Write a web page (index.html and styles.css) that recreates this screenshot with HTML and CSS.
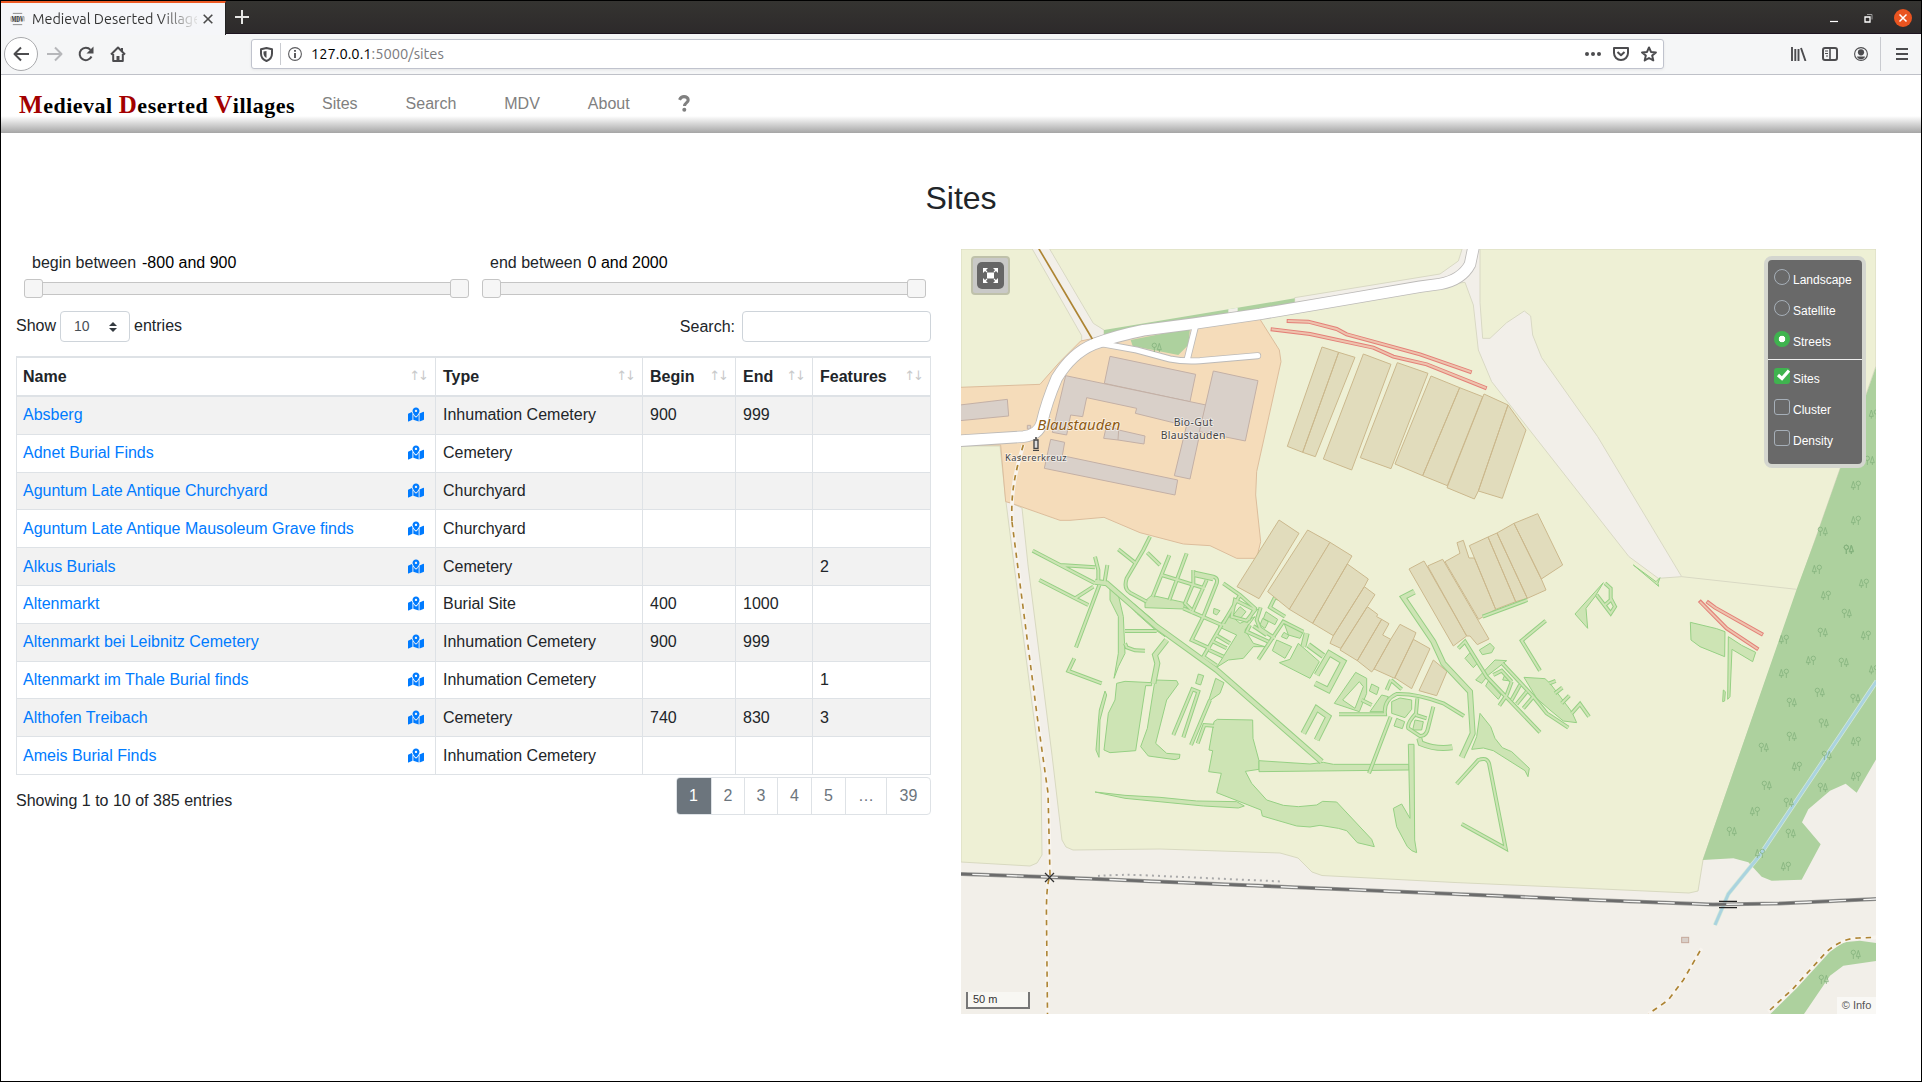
FILE: index.html
```html
<!DOCTYPE html>
<html lang="en">
<head>
<meta charset="utf-8">
<title>Medieval Deserted Villages</title>
<link rel="stylesheet" href="styles.css">
</head>
<body>
<svg class="defs" width="0" height="0">
  <symbol id="mapicon" viewBox="0 0 576 512"><path fill="currentColor" d="M288 0c-69.59 0-126 56.41-126 126 0 56.26 82.35 158.8 113.900 196.020 6.390 7.540 17.820 7.540 24.200 0C331.650 284.800 414 182.260 414 126 414 56.410 357.590 0 288 0zm0 168c-23.200 0-42-18.800-42-42s18.800-42 42-42 42 18.800 42 42-18.800 42-42 42zM20.120 215.950A32 32 0 0 0 0 245.660v250.320c0 11.320 11.430 19.060 21.940 14.860L160 448V214.920c-8.840-15.980-16.070-31.540-21.250-46.420L20.120 215.950zM288 359.670c-14.070 0-27.380-6.180-36.510-16.960-19.660-23.200-40.570-49.620-59.490-76.720v182l192 64V266c-18.920 27.090-39.820 53.520-59.490 76.720-9.130 10.770-22.440 16.950-36.510 16.950zm266.060-198.510L416 224v288l139.880-55.950A31.996 31.996 0 0 0 576 426.340V176.020c0-11.320-11.430-19.060-21.940-14.860z"/></symbol>
  <g id="trees" fill="none" stroke="#86b37e" stroke-width="2.500"><circle cx="8" cy="8" r="6.500"/><path d="M8 14v14M23 2l-6 19h12zM23 21v7"/></g>
  <g id="treesb" fill="none" stroke="#86b37e" stroke-width="2.500"><circle cx="23" cy="8" r="6.500"/><path d="M23 14v14M8 2l-6 19h12zM8 21v7"/></g>
</svg>

<header class="browser">
  <div class="tabstrip">
    <div class="tab">
      <svg class="favicon" viewBox="0 0 16 14"><path d="M3 1h10M3 13h10" stroke="#888"/><path d="M0 7h16" stroke="#ccc" stroke-width="5"/><text x="1.500" y="10.500" font-size="9" font-weight="bold" textLength="13" lengthAdjust="spacingAndGlyphs" fill="#333">MDV</text></svg>
      <span class="tabname">Medieval Deserted Villages</span>
      <svg class="close" viewBox="0 0 10 10"><path d="M.7.7l8.600 8.600M9.300.7L.7 9.300" stroke="#4a4a4a" stroke-width="1.600"/></svg>
    </div>
    <svg class="plus" viewBox="0 0 14 14"><path d="M7 0v14M0 7h14" stroke="#e6e6e4" stroke-width="2"/></svg>
    <div class="winbuttons">
      <svg width="8" height="18"><path d="M0 12.500h8" stroke="#fff" stroke-width="1.200"/></svg>
      <svg width="9" height="18"><path d="M1 8h5v5h-5z" fill="none" stroke="#fff" stroke-width="1.300"/><path d="M3 5.500h5v5" fill="none" stroke="#999"/></svg>
      <svg width="18" height="18"><circle cx="9" cy="9" r="9" fill="#e95420"/><path d="M5.500 5.500l7 7M12.500 5.500l-7 7" stroke="#fff" stroke-width="1.500"/></svg>
    </div>
  </div>
  <div class="toolbar">
    <div class="back"><svg width="17" height="16" viewBox="0 0 17 16"><path d="M16 8H2M8 1.500L1.500 8L8 14.500" class="ic"/></svg></div>
    <svg class="fwd" width="17" height="16" viewBox="0 0 17 16"><path d="M1 8h14M9 1.500L15.500 8L9 14.500" class="ic dim"/></svg>
    <svg class="reload" width="16" height="16" viewBox="0 0 16 16"><path d="M13.500 10.500A6.200 6.200 0 1 1 12.500 3.800" class="ic"/><path d="M15.500.5v7h-7z" fill="#4c4c4f"/></svg>
    <svg class="home" width="16" height="16" viewBox="0 0 16 16"><path d="M1 8.500L8 1.500l7 7M3.200 8v7h9.600V8M12 2v3" class="ic"/><path d="M6.500 10h3v5h-3z" fill="#4c4c4f"/></svg>
    <div class="urlbar">
      <svg width="13" height="15" viewBox="0 0 13 15"><path d="M6.500 1L12 2.200v4.300c0 4-3 6.500-5.500 7.500C4 13 1 10.500 1 6.500V2.200z" class="ic"/><path d="M6.500 4v7c-1.700-1-3-2.500-3-4.800V4.500z" fill="#4c4c4f"/></svg>
      <i class="vsep"></i>
      <svg width="14" height="14" viewBox="0 0 14 14"><circle cx="7" cy="7" r="6.400" fill="none" stroke="#5c5c5f" stroke-width="1.100"/><path d="M7 6v5M7 3v1.800" stroke="#4c4c4f" stroke-width="1.800"/></svg>
      <span class="url"><b>127.0.0.1</b>:5000/sites</span>
      <svg width="16" height="16" viewBox="0 0 16 16"><g fill="#4c4c4f"><circle cx="2" cy="8" r="2"/><circle cx="8" cy="8" r="2"/><circle cx="14" cy="8" r="2"/></g></svg>
      <svg class="pocket" width="16" height="14" viewBox="0 0 16 14"><path d="M1 1h14v5a7 7 0 0 1-14 0z" class="ic"/><path d="M4.500 5L8 8.300L11.500 5" class="ic"/></svg>
      <svg class="star" width="16" height="16" viewBox="0 0 16 16"><path d="M8 1.500l2 4.400 4.900.5-3.700 3.200 1.100 4.800L8 12l-4.300 2.400 1.100-4.800L1.100 6.400 6 5.900z" class="ic"/></svg>
    </div>
    <div class="tools">
      <svg width="16" height="14" viewBox="0 0 16 14"><path d="M1 0v14M4.300 2v12M7.500 2v12M10 1l4.500 13" stroke="#4c4c4f" stroke-width="1.900"/></svg>
      <svg width="16" height="14" viewBox="0 0 16 14"><rect x="1" y="1" width="14" height="12" rx="2" class="ic"/><path d="M8 1v12" stroke="#4c4c4f" stroke-width="1.600"/><path d="M3 4h3M3 6.500h3M4 9h2" stroke="#4c4c4f"/></svg>
      <svg width="14" height="14" viewBox="0 0 14 14"><circle cx="7" cy="7" r="6.400" fill="none" stroke="#4c4c4f" stroke-width="1.100"/><circle cx="7" cy="5.300" r="3.100" fill="#4c4c4f"/><path d="M3 9.500h8c0 1.500-2 2.700-4 2.700s-4-1.200-4-2.700z" fill="#4c4c4f"/></svg>
      <i class="vsep"></i>
      <svg width="12" height="12" viewBox="0 0 12 12"><path d="M0 1h12M0 6h12M0 11h12" stroke="#4c4c4f" stroke-width="2"/></svg>
    </div>
  </div>
</header>

<nav class="sitenav">
  <div class="brand"><b>M</b>edieval <b>D</b>eserted <b>V</b>illages</div>
  <div class="links"><a>Sites</a><a>Search</a><a>MDV</a><a>About</a></div>
  <svg class="help" viewBox="0 0 12 17"><path d="M1.500 4.800C2.500 2.700 4 1.600 6 1.600c2.400 0 4.200 1.300 4.200 3.300 0 3-3.700 2.900-3.700 6" fill="none" stroke="#808080" stroke-width="3.100"/><circle cx="6.300" cy="14.800" r="2" fill="#808080"/></svg>
</nav>

<main>
  <h2>Sites</h2>
  <div class="columns">
    <section class="list">
      <div class="ranges">
        <div class="range first"><div class="rlabel">begin between <b>-800 and 900</b></div><div class="slider"><i></i><i></i></div></div>
        <div class="range"><div class="rlabel">end between <b>0 and 2000</b></div><div class="slider"><i></i><i></i></div></div>
      </div>
      <div class="filters">
        <span class="show">Show</span>
        <span class="select">10<svg width="8" height="10" viewBox="0 0 8 10"><path d="M4 0l4 4H0zM4 10l4-4H0z" fill="#343a40"/></svg></span>
        <span class="show">entries</span>
        <span class="find">Search:</span><span class="input"></span>
      </div>
      <table>
        <colgroup><col class="c1"><col class="c2"><col class="c3"><col class="c4"><col class="c5"></colgroup>
        <thead><tr><th>Name<em>↑↓</em></th><th>Type<em>↑↓</em></th><th>Begin<em>↑↓</em></th><th>End<em>↑↓</em></th><th>Features<em>↑↓</em></th></tr></thead>
        <tbody>
        <tr><td><a>Absberg</a><svg><use href="#mapicon"/></svg></td><td>Inhumation Cemetery</td><td>900</td><td>999</td><td></td></tr>
        <tr><td><a>Adnet Burial Finds</a><svg><use href="#mapicon"/></svg></td><td>Cemetery</td><td></td><td></td><td></td></tr>
        <tr><td><a>Aguntum Late Antique Churchyard</a><svg><use href="#mapicon"/></svg></td><td>Churchyard</td><td></td><td></td><td></td></tr>
        <tr><td><a>Aguntum Late Antique Mausoleum Grave finds</a><svg><use href="#mapicon"/></svg></td><td>Churchyard</td><td></td><td></td><td></td></tr>
        <tr><td><a>Alkus Burials</a><svg><use href="#mapicon"/></svg></td><td>Cemetery</td><td></td><td></td><td>2</td></tr>
        <tr><td><a>Altenmarkt</a><svg><use href="#mapicon"/></svg></td><td>Burial Site</td><td>400</td><td>1000</td><td></td></tr>
        <tr><td><a>Altenmarkt bei Leibnitz Cemetery</a><svg><use href="#mapicon"/></svg></td><td>Inhumation Cemetery</td><td>900</td><td>999</td><td></td></tr>
        <tr><td><a>Altenmarkt im Thale Burial finds</a><svg><use href="#mapicon"/></svg></td><td>Inhumation Cemetery</td><td></td><td></td><td>1</td></tr>
        <tr><td><a>Althofen Treibach</a><svg><use href="#mapicon"/></svg></td><td>Cemetery</td><td>740</td><td>830</td><td>3</td></tr>
        <tr><td><a>Ameis Burial Finds</a><svg><use href="#mapicon"/></svg></td><td>Inhumation Cemetery</td><td></td><td></td><td></td></tr>
        </tbody>
      </table>
      <div class="foot">
        <span>Showing 1 to 10 of 385 entries</span>
        <div class="pages"><a class="on">1</a><a class="slim">2</a><a class="slim">3</a><a>4</a><a>5</a><a class="gap">…</a><a class="last">39</a></div>
      </div>
    </section>

    <section class="map">
      <svg class="canvas" viewBox="961 249 915 765">
        <rect x="961" y="249" width="915" height="765" fill="#f2efe9"/>
        <g class="farm">
          <path d="M961 249H1876V366L1703 860 1698 891 1689 893 1580 888 1455 882.500 1322 875.500 1312 872 1298 858 1280 853 1160 849 1073 850 1066 847 1062 840 1052 755 1028 565 1022 508 961 480Z"/>
          <path d="M961 446H1000L1006 502 1014 565 1041 773 1042 855 1037 863 1030 866 961 862Z"/>
        </g>
        <!-- farm yard, roads and the upper field strips -->
        <g transform="translate(960 245) scale(.33333)">
          <g class="bare">
            <path d="M210 0H262L400 235 432 255V285L365 290V272Z"/>
            <path d="M1004 158L1440 87 1495 48 1510 0H1560V172L1568 280H1590L1640 233 1693 198 1712 213 1718 270 1745 338 1913 575 2165 995 2095 1000 2007 935 1595 410 1555 315 1540 180 1515 112 1380 130 1004 180Z"/>
            <path d="M2165 995L2510 1033" fill="none"/>
          </g>
          <path class="yard" d="M0 427L240 418 300 350 362 288 450 270 900 223 958 315 963 350 890 680 887 750 902 890 890 940H830L750 902 670 897 540 863 432 817 330 826H300L155 775 137 770 122 600H0Z"/>
          <path class="wood" d="M432 255L1004 160V180L700 230 432 275ZM512 285L690 250 685 300 655 330 518 303Z"/>
          <path d="M805 193l28-5v16l-28 4z" fill="#f2efe9"/>
          <g class="bld">
            <path d="M450 334L707 388 690 470 433 415Z"/>
            <path d="M317 392L738 480 690 702 643 692 680 540 640 533 526 505 530 490 380 458 368 515 332 510 320 570 277 562Z"/>
            <path d="M760 378L894 407 856 588 718 560Z"/>
            <path d="M272 583L314 592 307 632 653 705 645 750 253 670Z"/>
            <path d="M440 540L476 555 555 573 552 597 474 585 431 580ZM476 555L474 585"/>
            <path d="M0 480L142 463 146 513 0 527ZM202 541H212V552H202Z"/>
          </g>
          <g class="road case"><path d="M-10 588L190 575Q235 570 245 535Q260 470 290 400Q335 325 400 298Q470 272 550 256L700 236 900 207 1130 168 1380 125 1440 117Q1505 105 1530 58L1542 0"/><path class="minor" d="M420 295L530 315 630 342Q670 350 720 347L893 332M682 342L706 245"/></g>
          <g class="road top"><path d="M-10 588L190 575Q235 570 245 535Q260 470 290 400Q335 325 400 298Q470 272 550 256L700 236 900 207 1130 168 1380 125 1440 117Q1505 105 1530 58L1542 0"/><path class="minor" d="M420 295L530 315 630 342Q670 350 720 347L893 332M682 342L706 245"/></g>
          <path d="M230 0L397 282" class="track solid"/>
          <path d="M190 600C160 700 150 760 158 860L175 960" class="halo"/>
          <path d="M190 600C160 700 150 760 158 860L175 960" class="track"/>
          <g class="red"><path d="M932 253L1050 267 1240 308 1300 335 1400 358 1580 430"/><path d="M980 228L1045 230 1130 252 1160 268 1380 328 1535 382"/></g>
          <g class="redin"><path d="M935 253L1050 267 1240 308 1300 335 1400 358 1578 429"/><path d="M983 228L1045 230 1130 252 1160 268 1380 328 1533 381"/></g>
          <g class="hut">
            <path d="M1086 306L1136 322 1028 622 982 604ZM1136 322L1185 337 1066 635 1028 622ZM1210 327L1293 358 1175 675 1090 642ZM1312 353L1404 385 1293 671 1201 638Z"/>
            <path d="M1413 393L1499 428 1388 692 1305 657ZM1499 428L1568 455 1462 722 1388 692ZM1572 447L1644 480 1555 738 1543 762 1461 728ZM1644 480L1698 555 1627 760 1555 738Z"/>
          </g>
          <use href="#trees" x="575" y="293"/>
          <path d="M222 585h12v25h-12zM225 579h6M219 616h18" fill="#ddd" stroke="#444" stroke-width="4"/>
          <g class="lbl">
            <text x="232" y="554" font-size="42" textLength="249" lengthAdjust="spacingAndGlyphs" fill="#8d5a14" font-style="italic">Blaustauden</text>
            <text x="641" y="543" font-size="31" textLength="117">Bio-Gut</text>
            <text x="602" y="582" font-size="31" textLength="194">Blaustauden</text>
            <text x="135" y="649" font-size="28" textLength="185">Kasererkreuz</text>
          </g>
        </g>
        <!-- excavated areas, west -->
        <g transform="translate(1010 520) scale(.33333)">
          <g class="dig">
            <path d="M300 205L325 225 340 290 345 400 325 440 312 475 325 400V290L300 240ZM325 220L370 250 430 300 465 350 430 325 380 280ZM405 243L425 226 525 248 520 267 405 263Z"/>
            <path d="M655 280L690 310 735 290 705 330 730 370 765 380 730 380 700 415 655 420 620 442 680 345 625 320Z"/>
            <path d="M285 513L268 570 258 690 267 712 270 600 290 525ZM320 490L345 484 425 488V497H407L377 692 300 698 282 690 295 580 315 540ZM435 480L500 482 505 492 470 540 437 670 470 700 510 703 508 715 495 719 415 708 392 680 412 625ZM565 462L581 467 572 495 557 490ZM617 475L642 488 630 520 595 545Z"/>
            <path d="M612 605L622 598 728 600 729 655 747 722V748L706 754 725 790 770 840 820 856 865 860 920 855 938 844 980 846 1085 958 1093 980 1042 968 1010 932 985 925 930 916 900 921 860 918 757 888 753 870 620 818 634 760 596 755 608 692 597 690Z"/>
            <path d="M255 816L345 826 450 832 560 843 680 845 703 858 685 864 580 858 345 835ZM747 722L900 732 940 727 970 733H1197V750L747 755Z"/>
            <path d="M800 360L845 380 825 415 787 392ZM820 303L880 335 870 355 835 345ZM865 370L928 425 900 475 808 428 840 418ZM690 260L708 275 690 297 670 285ZM612 265L630 272 620 285 610 280ZM768 275L803 298 795 314 760 296ZM758 295L775 305 765 325 750 315ZM822 337L837 346 830 357 814 350Z"/>
          </g>
          <defs>
            <g id="westlanes" fill="none"><path d="M68 92L150 135 255 190M150 135L255 142M88 180L195 235 235 255M195 235L250 200M268 195L225 310 198 382M255 110L265 150V190M292 135L283 190M420 50L400 90 350 175Q340 205 360 218L410 245M325 88L375 128M412 98L450 135M478 106L428 230M530 100L478 240M455 165L585 205M550 150V190L525 250 545 270M555 158L610 170Q625 175 620 190L580 290M590 180L545 280M520 265L635 315M580 290L545 360 600 385M635 315L580 410 620 437M618 345L660 370M610 365L650 385M597 390L640 410M640 190L690 225 735 265 715 300M690 225L640 310M675 240L735 270 710 302 665 290ZM345 333H440M345 370L350 382 375 391 405 392M193 415L175 453 275 490M490 645L547 508 565 515 520 652M543 675L600 540M563 670L583 615 612 617M832 245L795 232 780 262 825 290M752 262L740 300 750 325 795 355M720 315L710 335 775 365M730 318L770 345M745 418L820 305 880 335"/></g>
            <g id="westwide" fill="none"><path d="M255 185L290 190 440 320 620 450 935 725M470 360L435 405 442 430 430 490M555 163L610 175M890 340L880 380M895 375L940 408M920 465L958 400 1000 425 955 510 915 490M880 640L920 565 955 590 920 660"/></g>
          </defs>
          <use href="#westlanes" class="lane"/><use href="#westwide" class="lane wide"/><use href="#westlanes" class="lanein"/><use href="#westwide" class="lanein wide"/>
        </g>
        <!-- excavated areas and huts, east -->
        <g transform="translate(1320 500) scale(.33333)">
          <g class="hut">
            <path d="M-123 60L-63 100-183 296-249 260ZM-37 90L30 127-92 328-157 275Z"/>
            <path d="M30 127L96 168 82 192-22 370-92 328ZM82 192L145 237 133 260 40 407-22 370ZM133 260L165 284 142 320 62 445 30 430 40 407ZM142 320L173 343 170 350 185 358 112 482 60 450ZM185 358L207 371 188 405 212 418 162 507 155 516 112 482ZM240 373L288 398 280 418 224 535 162 507 212 418ZM280 418L330 446 275 566 224 533ZM340 480L381 514 350 587 297 572Z"/>
            <path d="M267 207L312 183 440 408 400 438ZM323 198L368 178 507 417 472 434 450 408H440ZM375 185L420 160 411 128 430 121 447 174H463L527 328 476 358ZM448 137L504 111 587 305 527 328ZM504 111L531 99 622 295 587 305ZM531 99L582 70 664 237 678 270 622 295ZM582 70L653 41 728 195 664 237Z"/>
          </g>
          <g class="dig">
            <path fill-rule="evenodd" d="M107 517L140 535V580L118 635 43 610ZM118 545L130 560 105 625 68 600Z"/>
            <path d="M155 552L177 563 170 584 148 573ZM185 585L205 590 190 635H150ZM215 605L240 594 275 600V628L255 653 215 640ZM230 655L254 665 247 686 222 678ZM285 660L310 665 305 690 278 690ZM265 733H282L284 1020 290 1058Q275 1055 262 1040L230 980 220 925 245 912 270 955Z"/>
            <path d="M480 640L512 680 525 715 547 743 575 755 628 805 624 830 615 812 520 752 490 744 455 748 470 710ZM478 450L510 430 523 443 515 458 487 464ZM450 458L472 490 460 503 435 475ZM467 540L525 480 560 482 505 525 485 550ZM555 523L572 543 548 540ZM505 543L543 585 535 598 497 558ZM612 532L675 536 690 550 755 635 770 668 730 663 690 630 650 595ZM765 342L850 248 825 290 798 325 803 385Z"/>
          </g>
          <defs>
            <g id="eastlanes" fill="none"><path d="M57 643H195Q190 600 230 582Q290 580 370 610L432 648M213 540L200 570M213 540L245 568M125 600L155 615M212 650L147 820M292 595L288 640Q260 670 265 685L300 708Q320 710 325 680L340 620M288 645L320 655M410 852L475 780Q500 770 507 790L557 1045 425 972M415 445L435 425 500 530 660 697M547 490L640 590 680 640 745 683M520 525L545 512 575 545M575 545L560 585M600 555L575 600M620 575L590 612M640 590L610 625M560 585L538 617M688 550L707 543M705 580L727 563M725 610L748 587M755 640L780 612 807 650M677 362L605 422 660 512M488 350L622 300M855 250L872 265V295L885 320 872 340 830 285M872 300L855 315"/></g>
            <g id="eastwide" fill="none"><path d="M283 275L250 292 340 425 370 490 450 575 458 700 425 772M298 715L302 730Q350 750 397 742"/></g>
          </defs>
          <use href="#eastlanes" class="lane"/><use href="#eastwide" class="lane wide"/><use href="#eastlanes" class="lanein"/><use href="#eastwide" class="lanein wide"/>
        </g>
        <!-- wood, stream and south-east corner -->
        <g transform="translate(1580 540) scale(.33333)">
          <path class="wood" d="M890-525L705 0 650 148 368 960 460 955 505 967 545 1010 575 1022 665 1019 722 913 666 847 685 808 750 752 797 731 830 758 890 655Z"/>
          <path class="wood" d="M568 1425L650 1345 750 1235 790 1207 840 1202 890 1209V1263L790 1277 750 1307 670 1425Z"/>
          <path d="M890 423L540 945 445 1062 405 1155" fill="none" stroke="#d5e9d9" stroke-width="13"/>
          <path d="M890 423L540 945 445 1062 405 1155" fill="none" stroke="#aad3df" stroke-width="9"/>
          <g class="dig"><path d="M331 247L410 266 435 275 434 350 360 320 333 300ZM445 290L485 316 527 337 518 365 456 328 450 470 443 478ZM430 450L436 455 434 483 428 485ZM160 75L228 125 240 113 234 130 236 139Z"/></g>
          <g class="red"><path d="M380 184L405 203 549 284M358 182L440 265 535 328"/></g><g class="redin"><path d="M382 186L405 203 547 283M360 185L440 265 533 327"/></g>
          <rect x="305" y="1192" width="21" height="16" fill="#d9d0c9" stroke="#c6a99b" stroke-width="3"/>
          <path class="halo" d="M365 1225L310 1320 265 1380 205 1422M565 1415L640 1345 740 1235Q785 1195 835 1194L890 1192"/>
          <path class="track" d="M360 1233L310 1320 265 1380 205 1422M570 1410L640 1345 740 1235Q785 1195 835 1194L890 1192"/>
          <use href="#trees" x="791" y="14"/><use href="#trees" x="785" y="206"/><use href="#trees" x="713" y="263"/><use href="#trees" x="776" y="353"/><use href="#trees" x="704" y="443"/><use href="#trees" x="620" y="473"/><use href="#trees" x="811" y="461"/><use href="#trees" x="716" y="535"/><use href="#trees" x="620" y="575"/><use href="#trees" x="536" y="608"/><use href="#trees" x="725" y="632"/><use href="#trees" x="545" y="722"/><use href="#trees" x="713" y="728"/><use href="#trees" x="611" y="773"/><use href="#trees" x="440" y="860"/><use href="#trees" x="617" y="866"/><use href="#trees" x="812" y="1229"/><use href="#trees" x="716" y="1304"/><use href="#trees" x="713" y="-40"/><use href="#trees" x="791" y="14"/><use href="#trees" x="854" y="-253"/><use href="#trees" x="791" y="14"/>
          <use href="#treesb" x="695" y="74"/><use href="#treesb" x="836" y="116"/><use href="#treesb" x="722" y="152"/><use href="#treesb" x="842" y="272"/><use href="#treesb" x="596" y="284"/><use href="#treesb" x="677" y="347"/><use href="#treesb" x="596" y="386"/><use href="#treesb" x="866" y="375"/><use href="#treesb" x="812" y="590"/><use href="#treesb" x="635" y="665"/><use href="#treesb" x="812" y="695"/><use href="#treesb" x="509" y="800"/><use href="#treesb" x="524" y="926"/><use href="#treesb" x="602" y="965"/><use href="#treesb" x="812" y="-178"/><use href="#treesb" x="812" y="-73"/><use href="#treesb" x="866" y="-392"/>
        </g>
        <path d="M961 874L1048 877 1455 894 1580 899.500 1713 904.500 1780 903.500 1876 899" fill="none" stroke="#9b9b98" stroke-width="4"/>
        <path d="M961 874L1048 877 1455 894 1580 899.500 1713 904.500 1780 903.500 1876 899" fill="none" stroke="#6b6b6b" stroke-width="2.600"/>
        <path d="M961 874L1048 877 1455 894 1580 899.500 1713 904.500 1780 903.500 1876 899" fill="none" stroke="#f4f4f2" stroke-width="1.400" stroke-dasharray="17 17.300" stroke-dashoffset="23"/>
        <path d="M1719 901.300h18M1719 907.700h18" stroke="#222" stroke-width="1.200"/>
        <path d="M1098 876Q1120 874 1150 875.500L1282 881.500" fill="none" stroke="#aaa" stroke-width="2" stroke-dasharray="2 4"/>
        <path class="halo thin" d="M1012 522L1037 715 1048 793 1050 875M1049 879Q1046 890 1046.500 920L1047.500 1014"/>
        <path class="track thin" d="M1012 522L1037 715 1048 793 1050 875M1049 879Q1046 890 1046.500 920L1047.500 1014"/>
        <path d="M1045 873l9 9M1054 873l-9 9" stroke="#333" stroke-width="1.300"/>
      </svg>
      <div class="full"><svg viewBox="0 0 15 15"><path d="M4 4.500h7v6H4zM0 0h5L0 5zM15 0v5l-5-5zM0 15v-5l5 5zM15 15h-5l5-5z" fill="#fff"/><path d="M1 1l3 3M14 1l-3 3M1 14l3-3M14 14l-3-3" stroke="#fff" stroke-width="1.200"/></svg></div>
      <div class="layers">
        <label><i class="radio"></i>Landscape</label><label><i class="radio"></i>Satellite</label><label><i class="radio sel"></i>Streets</label>
        <hr>
        <label><i class="check sel"><svg viewBox="0 0 16 16"><path d="M4 7l4 3.500L15 2.500" fill="none" stroke="#fff" stroke-width="3.200"/></svg></i>Sites</label><label><i class="check"></i>Cluster</label><label><i class="check"></i>Density</label>
      </div>
      <div class="scale">50 m</div>
      <div class="info">© Info</div>
    </section>
  </div>
</main>
</body>
</html>
```
FILE: styles.css
```css
* { box-sizing: border-box; }
body { margin: 0; width: 1922px; height: 1082px; overflow: hidden; border: 1px solid #000; background: #fff; color: #212529; font: 16px/24px "Liberation Sans", Arial, sans-serif; }
svg { display: block; flex: none; }
.defs { position: absolute; }
i { font-style: normal; }

/* browser window */
.browser { height: 74px; font-family: Ubuntu, "Noto Sans", sans-serif; background: #f5f6f7; border-bottom: 1px solid #bfc1c8; }
.tabstrip { height: 33px; display: flex; background: linear-gradient(#353431, #2d2a2b); border-bottom: 1px solid #1d1420; }
.tab { width: 225px; height: 34px; border-top: 2px solid #ee5b26; background: #f5f6f9; display: flex; align-items: center; padding: 0 12px 0 9px; border-right: 1px solid #222; }
.favicon { width: 15px; height: 14px; font-family: "Liberation Serif", serif; }
.tabname { margin-left: 7px; width: 165px; font-size: 14.4px; line-height: 22px; overflow: hidden; white-space: nowrap; color: transparent; background: linear-gradient(90deg, #333 78%, #ddd 98%); background-clip: text; }
.close { width: 10px; height: 10px; margin-left: 6px; }
.plus { width: 14px; height: 14px; margin: 9px 0 0 9px; }
.winbuttons { margin-left: auto; display: flex; gap: 25px; padding: 8px 9px 0 0; align-items: flex-start; }
.winbuttons svg:first-child { margin-right: 1px; }
.winbuttons svg:last-child { margin-left: -4px; }
.toolbar { height: 40px; display: flex; align-items: center; padding-left: 3px; }
.ic { fill: none; stroke: #4c4c4f; stroke-width: 2; stroke-linejoin: round; }
.dim { stroke: #b6b7ba; }
.back { width: 34px; height: 34px; border: 1px solid #a9aaad; border-radius: 50%; background: #fff; display: grid; place-items: center; }
.fwd { margin-left: 8px; }
.reload { margin-left: 15px; }
.home { margin-left: 16px; }
.urlbar { width: 1413px; height: 30px; margin-left: 125px; border: 1px solid #c0c3cd; border-radius: 3px; background: #fff; display: flex; align-items: center; padding: 0 6px 0 8px; box-shadow: 0 1px 3px #0001; }
.vsep { width: 1px; height: 22px; background: #c9cbd0; margin: 0 7px 0 7px; }
.url { margin: 0 auto 0 9px; font-size: 14.7px; color: #7b7b7e; }
.url b { font-weight: 400; color: #000; }
.pocket { margin-left: 12px; }
.star { margin-left: 12px; }
.tools { display: flex; align-items: center; margin-left: auto; padding-right: 13px; gap: 16px; }
.tools svg:nth-child(2) { margin-left: -1px; }
.tools .vsep { height: 34px; margin: 0 -1px 0 -4px; }

/* site header */
.sitenav { height: 58px; display: flex; background: linear-gradient(#fff 0 41px, #a5a5a5 58px); color: #808080; }
.brand { width: 276px; margin: 17px 0 0 18px; font: bold 22px/26px "Liberation Serif", serif; letter-spacing: .52px; color: #000; white-space: nowrap; }
.brand b { color: #a30000; font-size: 25px; }
.links { display: flex; gap: 48px; margin: 17px 0 0 27px; }
.help { width: 12px; height: 17px; margin: 20px 0 0 48px; }

main { padding: 0 15px; }
h2 { margin: 46px 0 32px; font: 32px/38px "Liberation Sans", sans-serif; text-align: center; }
.columns { display: grid; grid-template-columns: 915px 915px; gap: 30px; }
.list { padding-top: 2px; }
.ranges { display: flex; padding-left: 8px; gap: 13px; }
.range { width: 444px; }
.range.first { width: 445px; }
.rlabel { padding-left: 8px; }
.rlabel b { font-weight: 400; color: #000; margin-left: 1.500px; }
.slider { height: 13px; margin: 7px 9px 0; border: 1px solid #c5c5c5; background: #f1f1f1; display: flex; justify-content: space-between; align-items: center; }
.slider i { width: 19px; height: 19px; margin: 0 -10px; border: 1px solid #c5c5c5; border-radius: 3px; background: #f6f6f6; flex: none; }
.filters { display: flex; height: 31px; margin-top: 16px; }
.show { line-height: 30px; }
.select { width: 70px; height: 31px; margin: 0 4px 0 4px; border: 1px solid #ced4da; border-radius: 4px; font-size: 14px; line-height: 31px; color: #495057; display: flex; align-items: center; justify-content: space-between; padding: 0 12px 0 13px; }
.find { margin-left: auto; line-height: 31px; }
.input { width: 189px; height: 31px; margin-left: 7px; border: 1px solid #ced4da; border-radius: 4px; }

table { width: 915px; margin-top: 14px; border-spacing: 0; table-layout: fixed; border-top: 1px solid #dee2e6; border-right: 1px solid #dee2e6; }
.c1 { width: 419px; } .c2 { width: 207px; } .c3 { width: 93px; } .c4 { width: 77px; }
th { height: 40px; padding: 0 0 0 7px; text-align: left; position: relative; border: solid #dee2e6; border-width: 1px 0 2px 1px; }
th em { position: absolute; right: 8px; top: 6px; font: 13px/24px "DejaVu Sans", sans-serif; letter-spacing: -2px; color: #c8c9ca; }
td { height: 37.8px; padding: 0 0 0 7px; border: solid #dee2e6; border-width: 0 0 1px 1px; }
th:first-child { padding-left: 6px; }
td:first-child { padding: 0 11px 0 6px; }
td a { color: #007bff; }
td svg { float: right; width: 16px; height: 15px; margin-top: 4px; color: #007bff; }
tbody tr:nth-child(odd) { background: #f2f2f2; }
.foot { display: flex; justify-content: space-between; margin-top: 2px; }
.foot > span { padding-top: 12px; }
.pages { display: flex; height: 38px; color: #6c757d; border: 1px solid #dee2e6; border-radius: 4px; overflow: hidden; }
.pages a { width: 34px; line-height: 36px; text-align: center; border-left: 1px solid #dee2e6; }
.pages .on { width: 35px; margin: -1px 0 -1px -1px; line-height: 38px; background: #6c757d; color: #fff; border: 0; }
.pages .slim { width: 33px; }
.pages .gap { width: 41px; }
.pages .last { width: 44px; }

/* map */
.map { position: relative; width: 915px; height: 765px; overflow: hidden; }
.canvas { width: 915px; height: 765px; }
.farm { fill: #eef0d5; stroke: #d8d9c0; }
.bare { fill: #f2efe9; stroke: #d9d9c4; stroke-width: 3; }
.yard { fill: #f5dcba; stroke: #dcbd9c; stroke-width: 3; }
.wood { fill: #add19e; }
.bld { fill: #d9d0c9; stroke: #c3b0a6; stroke-width: 3; }
.hut { fill: #e1dcbc; stroke: #cbb88d; stroke-width: 3; }
.road { fill: none; stroke-linecap: round; stroke-linejoin: round; }
.case { stroke: #bcbab8; stroke-width: 37; }
.case .minor { stroke-width: 21; }
.top { stroke: #fff; stroke-width: 32; }
.top .minor { stroke-width: 16; }
.track { fill: none; stroke: #ad8433; stroke-width: 5; stroke-dasharray: 16 15; }
.track.solid { stroke-dasharray: none; }
.halo { fill: none; stroke: #f8f4ee; stroke-width: 11; }
.track.thin { stroke-width: 1.6; stroke-dasharray: 5.3 5; }
.halo.thin { stroke-width: 4; }
.dig { fill: #cde4b4; stroke: #96d084; stroke-width: 3; }
.lane { stroke: #96d084; stroke-width: 12; }
.lane.wide { stroke-width: 18; }
.lanein { stroke: #cde4b4; stroke-width: 6; }
.lanein.wide { stroke-width: 12; }
.red { fill: none; stroke: #e48078; stroke-width: 12; }
.redin { fill: none; stroke: #eec3ad; stroke-width: 6; }
.lbl { font-family: "Noto Sans", sans-serif; fill: #444; stroke: #fff9; stroke-width: 5; paint-order: stroke; }
.full { position: absolute; left: 10px; top: 7px; width: 39px; height: 39px; border: 2px solid #bfc1aa; border-radius: 4px; background: #c9c9c7; display: grid; place-items: center; }
.full::before { content: ""; position: absolute; inset: 4px; background: #666; border-radius: 5px; }
.full svg { width: 15px; height: 15px; position: relative; }
.layers { position: absolute; left: 803px; top: 7px; width: 102px; height: 212px; border: 4px solid #d4d6cf; border-radius: 8px; background: #696969; color: #fff; font-size: 12px; padding-top: 9px; }
.layers label { display: flex; height: 31px; line-height: 22px; padding-left: 6px; }
.layers i { width: 16px; height: 16px; margin-right: 3px; border: 1px solid #a6afb8; border-radius: 3px; }
.layers .radio { border-radius: 50%; }
.layers .sel { background: #3fb34f; border: 0; }
.layers .radio.sel { background: radial-gradient(#fff 0 3px, #3fb34f 3.600px); }
.layers hr { height: 1px; border: 0; background: #eee; margin: -3px 0 8px; }
.scale { position: absolute; left: 5px; top: 743px; width: 64px; height: 17px; border: 2px solid #777; border-top: 0; background: #f8f7f3; font-size: 11px; line-height: 14px; padding-left: 5px; color: #333; }
.info { position: absolute; right: 0; bottom: 0; width: 39px; height: 17px; background: #f9f8f5; font-size: 11px; line-height: 17px; text-align: center; color: #555; }
```
